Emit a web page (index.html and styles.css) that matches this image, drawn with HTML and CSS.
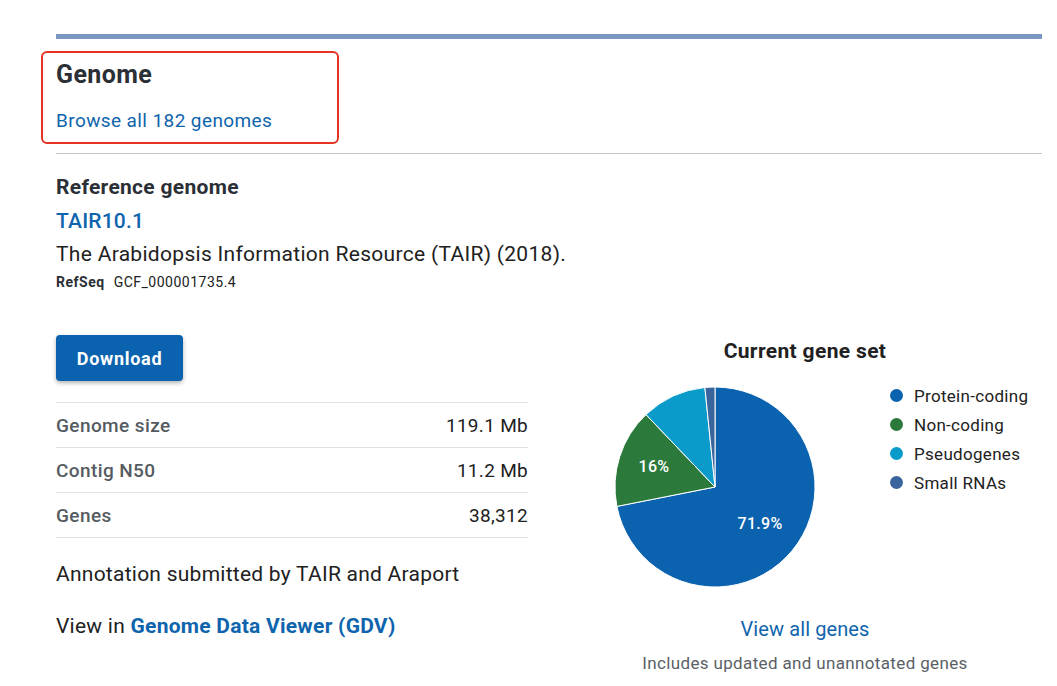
FILE: index.html
```html
<!DOCTYPE html>
<html lang="en">
<head>
<meta charset="utf-8">
<title>Genome</title>
<link rel="stylesheet" href="styles.css">
</head>
<body>
<main class="page">
  <div class="topbar"></div>
  <div class="head-box">
    <h2 class="head-title">Genome</h2>
    <a class="link head-link" href="#">Browse all 182 genomes</a>
  </div>
  <div class="divider"></div>

  <section class="ref">
    <h3 class="ref-title">Reference genome</h3>
    <a class="link ref-name" href="#">TAIR10.1</a>
    <p class="ref-desc">The Arabidopsis Information Resource (TAIR) (2018).</p>
    <p class="ref-seq"><b>RefSeq</b><span>GCF_000001735.4</span></p>
  </section>

  <div class="cols">
    <div class="left">
      <button class="btn">Download</button>
      <div class="stats">
        <div class="stat"><span class="stat-label">Genome size</span><span class="stat-value">119.1 Mb</span></div>
        <div class="stat"><span class="stat-label">Contig N50</span><span class="stat-value">11.2 Mb</span></div>
        <div class="stat"><span class="stat-label">Genes</span><span class="stat-value">38,312</span></div>
      </div>
      <p class="note">Annotation submitted by TAIR and Araport</p>
      <p class="note view">View in <a class="link strong" href="#">Genome Data Viewer (GDV)</a></p>
    </div>

    <div class="right">
      <h3 class="chart-title">Current gene set</h3>
      <div class="chart">
        <svg class="pie" width="200" height="200" viewBox="0 0 200 200">
          <path d="M100,100 L100,0 A100,100 0 1 1 1.9,119.4 Z" fill="#0b62ae" stroke="#fff" stroke-width="1"/>
          <path d="M100,100 L1.9,119.4 A100,100 0 0 1 31.0,27.6 Z" fill="#2b7a3c" stroke="#fff" stroke-width="1"/>
          <path d="M100,100 L31.0,27.6 A100,100 0 0 1 89.9,0.5 Z" fill="#0a9bcb" stroke="#fff" stroke-width="1"/>
          <path d="M100,100 L89.9,0.5 A100,100 0 0 1 100,0 Z" fill="#3a659c" stroke="#fff" stroke-width="1"/>
          <text x="39" y="85" class="pie-label" text-anchor="middle">16%</text>
          <text x="145" y="142" class="pie-label" text-anchor="middle">71.9%</text>
        </svg>
        <ul class="legend">
          <li><span class="dot dot-protein"></span>Protein-coding</li>
          <li><span class="dot dot-noncoding"></span>Non-coding</li>
          <li><span class="dot dot-pseudo"></span>Pseudogenes</li>
          <li><span class="dot dot-small"></span>Small RNAs</li>
        </ul>
      </div>
      <a class="link all-genes" href="#">View all genes</a>
      <p class="chart-note">Includes updated and unannotated genes</p>
    </div>
  </div>
</main>
</body>
</html>
```

FILE: styles.css
```css
* { box-sizing: border-box; }

body {
  margin: 0;
  background: #fff;
  font-family: Roboto, "Liberation Sans", Arial, sans-serif;
  color: #212121;
}

.page {
  padding: 34px 15px 0 56px;
}

.topbar {
  height: 5px;
  background: #7b98c2;
}

.link {
  color: #0e64ad;
  text-decoration: none;
}

.head-box {
  margin: 12px 0 0 -15px;
  width: 298px;
  height: 93px;
  border: 2px solid #e63323;
  border-radius: 6px;
  padding: 8px 13px 0;
}

.head-title {
  margin: 0;
  font-size: 25px;
  line-height: 28px;
  letter-spacing: 0.4px;
  font-weight: 700;
  color: #2b2f36;
}

.head-link {
  display: block;
  margin-top: 20px;
  font-size: 19px;
  line-height: 24px;
  letter-spacing: 0.4px;
}

.divider {
  margin-top: 9px;
  height: 1px;
  background: #c4c4c4;
}

.ref-title {
  margin: 21px 0 0;
  font-size: 21px;
  line-height: 24px;
  letter-spacing: 0.3px;
  font-weight: 700;
  color: #2b2f36;
}

.ref-name {
  display: block;
  margin-top: 10px;
  font-size: 21px;
  line-height: 24px;
  letter-spacing: 0.2px;
  font-weight: 500;
}

.ref-desc {
  margin: 8px 0 0;
  font-size: 21px;
  line-height: 26px;
  letter-spacing: 0.3px;
}

.ref-seq {
  margin: 6px 0 0;
  font-size: 14px;
  line-height: 18px;
  letter-spacing: 0.5px;
  display: flex;
  gap: 9px;
}

.ref-seq b { font-weight: 700; color: #2b2f36; }

.cols {
  display: flex;
  gap: 40px;
}

.left {
  width: 472px;
  padding-top: 44px;
}

.btn {
  display: block;
  width: 127px;
  height: 46px;
  border: 0;
  border-radius: 4px;
  background: #0b62ae;
  color: #fff;
  font-family: inherit;
  font-size: 18px;
  letter-spacing: 0.7px;
  font-weight: 700;
  box-shadow: 0 2px 4px rgba(0, 0, 0, 0.3);
}

.stats {
  margin-top: 21px;
  border-bottom: 1px solid #e2e2e2;
}

.stat {
  display: flex;
  justify-content: space-between;
  align-items: center;
  height: 45px;
  border-top: 1px solid #e2e2e2;
  font-size: 19px;
}

.stat-label {
  color: #555b61;
  font-weight: 500;
  letter-spacing: 0.4px;
}

.stat-value {
  color: #212121;
  letter-spacing: 0.3px;
}

.note {
  margin: 23px 0 0;
  font-size: 21px;
  line-height: 26px;
  letter-spacing: 0.25px;
}

.note.view { margin-top: 26px; }

.strong { font-weight: 700; }

.right {
  width: 474px;
  padding-top: 48px;
  display: flex;
  flex-direction: column;
  align-items: center;
}

.chart-title {
  margin: 0;
  font-size: 21px;
  line-height: 24px;
  letter-spacing: 0.35px;
  font-weight: 700;
  color: #212121;
}

.chart {
  align-self: stretch;
  display: flex;
  align-items: flex-start;
  margin-top: 18px;
  padding-left: 47px;
  gap: 75px;
}

.pie {
  display: block;
  margin-top: 6px;
  overflow: visible;
}

.pie-label {
  fill: #fff;
  font-size: 16px;
  letter-spacing: 0.3px;
  font-weight: 500;
  font-family: Roboto, "Liberation Sans", sans-serif;
}

.legend {
  list-style: none;
  margin: 0;
  padding: 0;
}

.legend li {
  display: flex;
  align-items: center;
  gap: 11px;
  height: 29px;
  font-size: 17px;
  letter-spacing: 0.3px;
  color: #212121;
}

.dot {
  width: 13px;
  height: 13px;
  border-radius: 50%;
}

.dot-protein { background: #0b62ae; }
.dot-noncoding { background: #2b7a3c; }
.dot-pseudo { background: #0a9bcb; }
.dot-small { background: #3a659c; }

.all-genes {
  margin-top: 30px;
  font-size: 20px;
  line-height: 24px;
  letter-spacing: 0.1px;
}

.chart-note {
  margin: 12px 0 0;
  font-size: 17px;
  line-height: 20px;
  letter-spacing: 0.35px;
  color: #5a5f66;
}
```
